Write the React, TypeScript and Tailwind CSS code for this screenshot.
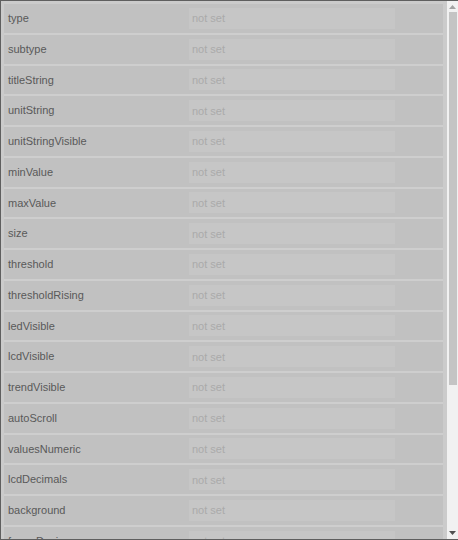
const fields = [
  "type",
  "subtype",
  "titleString",
  "unitString",
  "unitStringVisible",
  "minValue",
  "maxValue",
  "size",
  "threshold",
  "thresholdRising",
  "ledVisible",
  "lcdVisible",
  "trendVisible",
  "autoScroll",
  "valuesNumeric",
  "lcdDecimals",
  "background",
  "frameDesign",
];

const PropertyRow = ({ name }: { name: string }) => (
  <div className="flex h-[30.75px] shrink-0 items-center border-b-2 border-[#cecece] bg-[#c1c1c1]">
    <div className="w-[185px] pl-[4px] text-[11px] text-[#595959]">{name}</div>
    <input
      type="text"
      placeholder="not set"
      className="h-[21px] w-[206px] bg-[#c6c6c6] px-[3px] text-[11px] text-[#595959] outline-none placeholder:text-[#aaaaaa]"
    />
  </div>
);

export default function App() {
  return (
    <div
      className="flex h-[540px] w-[458px] overflow-hidden border-t border-l border-b border-[#5f5f5f] bg-[#cbcbcb]"
      style={{ fontFamily: '"Liberation Sans", Arial, sans-serif' }}
    >
      <div className="flex min-w-0 flex-1 flex-col overflow-hidden pl-[3px] pt-[3px] pr-[4px]">
        {fields.map((f) => (
          <PropertyRow key={f} name={f} />
        ))}
      </div>
      <div className="flex w-[11px] shrink-0 flex-col items-center bg-[#f1f1f1]">
        <div className="flex h-[11px] w-full items-center justify-center">
          <svg width="7" height="4" viewBox="0 0 7 4">
            <path d="M3.5 0 L7 4 L0 4 Z" fill="#a3a3a3" />
          </svg>
        </div>
        <div className="h-[373px] w-[8px] bg-[#c4c4c4]" />
        <div className="flex-1" />
        <div className="flex h-[13px] w-full items-center justify-center">
          <svg width="7" height="4" viewBox="0 0 7 4">
            <path d="M0 0 L7 0 L3.5 4 Z" fill="#505050" />
          </svg>
        </div>
      </div>
    </div>
  );
}
